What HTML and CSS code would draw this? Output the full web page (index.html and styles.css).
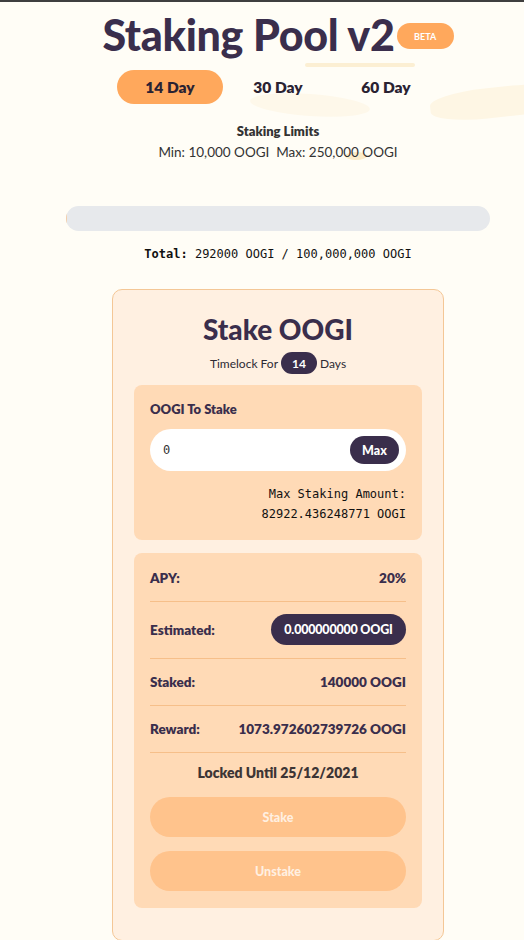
FILE: index.html
```html
<!DOCTYPE html>
<html lang="en">
<head>
<meta charset="utf-8">
<title>Staking Pool v2</title>
<link rel="stylesheet" href="styles.css">
</head>
<body>
<div class="topbar"></div>
<main class="page">
  <div class="deco deco-line"></div>
  <div class="deco deco-blob1"></div>
  <div class="deco deco-blob2"></div>
  <div class="deco deco-blob3"></div>

  <header class="title-row">
    <h1 class="title">Staking Pool v2</h1>
    <span class="beta">BETA</span>
  </header>

  <nav class="tabs">
    <button class="tab tab-active">14 Day</button>
    <button class="tab">30 Day</button>
    <button class="tab">60 Day</button>
  </nav>

  <section class="limits">
    <div class="limits-title">Staking Limits</div>
    <div class="limits-values">Min: 10,000 OOGI&nbsp;&nbsp;Max: 250,000 OOGI</div>
  </section>

  <div class="progress"><div class="progress-fill" style="width:1px"></div></div>
  <div class="total"><b>Total:</b> 292000 OOGI / 100,000,000 OOGI</div>

  <section class="card">
    <h2 class="card-title">Stake OOGI</h2>
    <div class="timelock">Timelock For <span class="timelock-pill">14</span> Days</div>

    <div class="panel panel-input">
      <div class="input-label">OOGI To Stake</div>
      <div class="input-wrap">
        <span class="input-value">0</span>
        <button class="max-btn">Max</button>
      </div>
      <div class="max-amount">
        <div>Max Staking Amount:</div>
        <div>82922.436248771 OOGI</div>
      </div>
    </div>

    <div class="panel panel-stats">
      <div class="row"><span>APY:</span><span>20%</span></div>
      <div class="row row-est"><span>Estimated:</span><span class="est-pill">0.000000000 OOGI</span></div>
      <div class="row"><span>Staked:</span><span>140000 OOGI</span></div>
      <div class="row row-last"><span>Reward:</span><span>1073.972602739726 OOGI</span></div>
      <div class="locked">Locked Until 25/12/2021</div>
      <button class="action">Stake</button>
      <button class="action">Unstake</button>
    </div>
  </section>
</main>
</body>
</html>
```
FILE: styles.css
```css
* { box-sizing: border-box; }

html, body {
  margin: 0;
  padding: 0;
  background: #fffdf6;
}

body {
  font-family: "Lato", "Noto Sans", sans-serif;
  color: #3a2e4c;
}

.topbar {
  height: 2px;
  background: #3f3f3f;
}

.page {
  position: relative;
  padding-left: 32px;
  overflow: hidden;
}

.deco {
  position: absolute;
  pointer-events: none;
}
.deco-line {
  left: 305px;
  top: 61px;
  width: 110px;
  height: 4px;
  border-radius: 3px;
  background: #fcefd3;
}
.deco-blob1 {
  left: 250px;
  top: 92px;
  width: 120px;
  height: 22px;
  border-radius: 50%;
  background: #fef8ea;
  transform: rotate(4deg);
}
.deco-blob2 {
  left: 430px;
  top: 85px;
  width: 140px;
  height: 30px;
  border-radius: 40%;
  background: #fef6e4;
  transform: rotate(-6deg);
}
.deco-blob3 {
  left: 345px;
  top: 150px;
  width: 22px;
  height: 8px;
  border-radius: 50%;
  background: #fcecc9;
}

.title-row {
  position: relative;
  display: flex;
  justify-content: center;
  align-items: center;
  padding-top: 7px;
  height: 58px;
}

.title {
  margin: 0;
  font-size: 43px;
  font-weight: 900;
  line-height: 50px;
  letter-spacing: -0.3px;
  color: #3a2e4c;
}

.beta {
  margin-left: 2px;
  margin-top: 3px;
  width: 57px;
  height: 26px;
  border-radius: 13px;
  background: #ffa85c;
  color: #fff;
  font-size: 9px;
  font-weight: 700;
  display: flex;
  align-items: center;
  justify-content: center;
}

.tabs {
  position: relative;
  display: flex;
  justify-content: center;
  gap: 2px;
  margin-top: 10px;
}

.tab {
  width: 106px;
  height: 34px;
  border: 0;
  border-radius: 17px;
  background: transparent;
  font-family: inherit;
  font-size: 15.5px;
  font-weight: 800;
  color: #2a2232;
  padding: 0;
}
.tab-active {
  background: #ffa85c;
}

.limits {
  position: relative;
  text-align: center;
  margin-top: 18px;
  font-size: 13px;
  color: #333;
}
.limits-title {
  font-weight: 800;
  line-height: 19px;
}
.limits-values {
  font-size: 13.5px;
  line-height: 22px;
}

.progress {
  position: relative;
  margin: 43px 34px 0 34px;
  height: 25px;
  border-radius: 13px;
  background: #e7e9ec;
  overflow: hidden;
}
.progress-fill {
  height: 100%;
  background: #f3cda8;
}

.total {
  text-align: center;
  font-family: "DejaVu Sans Mono", "Liberation Mono", monospace;
  font-size: 12px;
  color: #111;
  margin-top: 16px;
  line-height: 14px;
}
.total b { font-weight: 700; }

.card {
  width: 332px;
  margin: 28px auto 0;
  background: #fff0e1;
  border: 1px solid #f4c796;
  border-radius: 10px;
  padding: 20px 21px 32px;
}

.card-title {
  margin: 0;
  text-align: center;
  font-size: 28px;
  font-weight: 900;
  line-height: 38px;
  color: #3a2e4c;
}

.timelock {
  display: flex;
  justify-content: center;
  align-items: center;
  gap: 3px;
  margin-top: 4px;
  font-size: 12px;
  color: #2d2a33;
}
.timelock-pill {
  display: inline-flex;
  align-items: center;
  justify-content: center;
  width: 36px;
  height: 22px;
  border-radius: 11px;
  background: #3a2e4c;
  color: #fff;
  font-weight: 700;
  font-size: 12px;
}

.panel {
  background: #ffdab6;
  border-radius: 8px;
  padding: 0 16px;
}

.panel-input {
  margin-top: 11px;
  padding-top: 16px;
  padding-bottom: 16px;
}

.input-label {
  font-size: 13px;
  font-weight: 800;
  line-height: 16px;
  color: #3a2e4c;
}

.input-wrap {
  margin-top: 12px;
  height: 42px;
  border-radius: 21px;
  background: #fff;
  display: flex;
  align-items: center;
  justify-content: space-between;
  padding: 0 7px 0 13px;
}
.input-value {
  font-family: "DejaVu Sans Mono", "Liberation Mono", monospace;
  font-size: 12px;
  color: #333;
}
.max-btn {
  width: 49px;
  height: 28px;
  border: 0;
  border-radius: 14px;
  background: #3a2e4c;
  color: #fff;
  font-family: inherit;
  font-size: 12.5px;
  font-weight: 900;
  padding: 0;
}

.max-amount {
  margin-top: 13px;
  text-align: right;
  font-family: "DejaVu Sans Mono", "Liberation Mono", monospace;
  font-size: 12px;
  line-height: 20px;
  color: #111;
}

.panel-stats {
  margin-top: 13px;
  padding-top: 2px;
  padding-bottom: 17px;
}

.row {
  display: flex;
  justify-content: space-between;
  align-items: center;
  padding: 11px 0;
  line-height: 24px;
  font-size: 13.5px;
  font-weight: 800;
  color: #3a2e4c;
  border-bottom: 1px solid #f6bf8a;
}
.row-est {
  padding: 12px 0 13px;
}

.est-pill {
  display: inline-flex;
  align-items: center;
  justify-content: center;
  height: 31px;
  width: 135px;
  border-radius: 16px;
  background: #3a2e4c;
  color: #fff;
  font-weight: 900;
  font-size: 12.5px;
  letter-spacing: -0.2px;
}

.locked {
  text-align: center;
  font-size: 14px;
  font-weight: 800;
  line-height: 20px;
  padding-top: 10px;
  color: #3d3535;
}

.action {
  display: block;
  width: 100%;
  height: 40px;
  border: 0;
  border-radius: 20px;
  background: #ffc38c;
  color: rgba(255, 255, 255, 0.75);
  font-family: inherit;
  font-size: 12.5px;
  font-weight: 900;
  margin-top: 14px;
}
.action + .action {
  margin-top: 14px;
}
```
